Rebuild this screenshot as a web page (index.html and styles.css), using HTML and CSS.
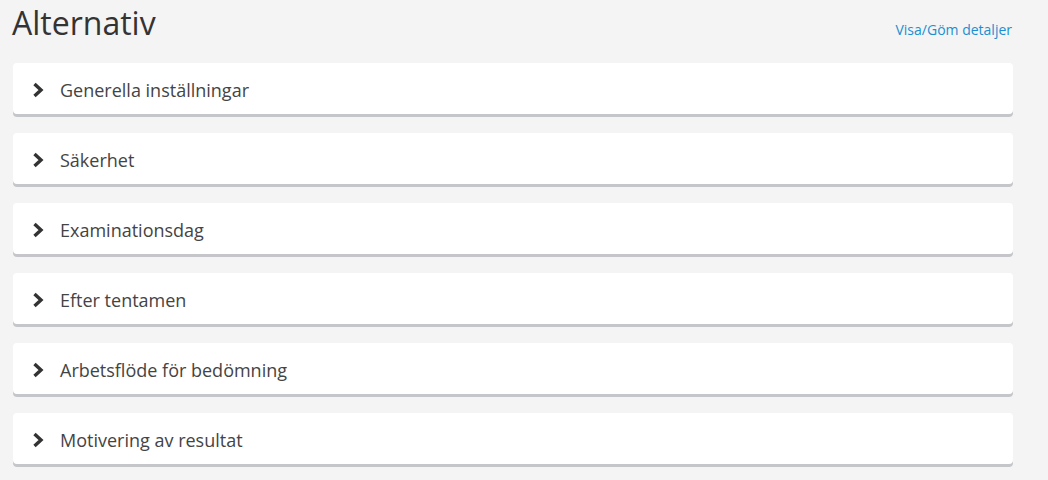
FILE: index.html
```html
<!DOCTYPE html>
<html lang="sv">
<head>
    <meta charset="UTF-8">
    <title>Alternativ</title>
    <link rel="stylesheet" href="styles.css">
</head>
<body>
    <div class="page">
        <div class="page-header">
            <h1>Alternativ</h1>
            <a href="#" class="toggle-link">Visa/Göm detaljer</a>
        </div>
        <div class="section-list">
            <div class="section-card">
                <svg class="chevron" viewBox="0 0 12 16" width="12" height="16"><path d="M2.5 2 L9 8 L2.5 14" fill="none" stroke="#333" stroke-width="3.4" stroke-linejoin="miter"/></svg>
                <span>Generella inställningar</span>
            </div>
            <div class="section-card">
                <svg class="chevron" viewBox="0 0 12 16" width="12" height="16"><path d="M2.5 2 L9 8 L2.5 14" fill="none" stroke="#333" stroke-width="3.4" stroke-linejoin="miter"/></svg>
                <span>Säkerhet</span>
            </div>
            <div class="section-card">
                <svg class="chevron" viewBox="0 0 12 16" width="12" height="16"><path d="M2.5 2 L9 8 L2.5 14" fill="none" stroke="#333" stroke-width="3.4" stroke-linejoin="miter"/></svg>
                <span>Examinationsdag</span>
            </div>
            <div class="section-card">
                <svg class="chevron" viewBox="0 0 12 16" width="12" height="16"><path d="M2.5 2 L9 8 L2.5 14" fill="none" stroke="#333" stroke-width="3.4" stroke-linejoin="miter"/></svg>
                <span>Efter tentamen</span>
            </div>
            <div class="section-card">
                <svg class="chevron" viewBox="0 0 12 16" width="12" height="16"><path d="M2.5 2 L9 8 L2.5 14" fill="none" stroke="#333" stroke-width="3.4" stroke-linejoin="miter"/></svg>
                <span>Arbetsflöde för bedömning</span>
            </div>
            <div class="section-card">
                <svg class="chevron" viewBox="0 0 12 16" width="12" height="16"><path d="M2.5 2 L9 8 L2.5 14" fill="none" stroke="#333" stroke-width="3.4" stroke-linejoin="miter"/></svg>
                <span>Motivering av resultat</span>
            </div>
        </div>
    </div>
</body>
</html>
```

FILE: styles.css
```css
/* Reset */
* {
    margin: 0;
    padding: 0;
    box-sizing: border-box;
}

body {
    font-family: "Open Sans", Arial, sans-serif;
    background-color: #f4f4f4;
    color: #444;
    overflow: hidden;
}

.page {
    width: 1000px;
    margin-left: 13px;
}

.page-header {
    display: flex;
    justify-content: space-between;
    align-items: baseline;
    height: 63px;
    padding-top: 1px;
}

.page-header h1 {
    font-size: 32px;
    font-weight: 400;
    color: #333;
    margin-left: -1px;
    line-height: 44px;
}

.toggle-link {
    font-size: 14px;
    color: #1a8fd1;
    text-decoration: none;
    margin-right: 1px;
}

.section-list {
    display: flex;
    flex-direction: column;
    gap: 16px;
}

.section-card {
    display: flex;
    align-items: center;
    height: 54px;
    padding-left: 19px;
    background-color: #ffffff;
    border-radius: 4px;
    box-shadow: inset 0 -3px 0 #c4c6c9;
    font-size: 18px;
    color: #444;
}

.chevron {
    margin-right: 16px;
    flex-shrink: 0;
}
```
